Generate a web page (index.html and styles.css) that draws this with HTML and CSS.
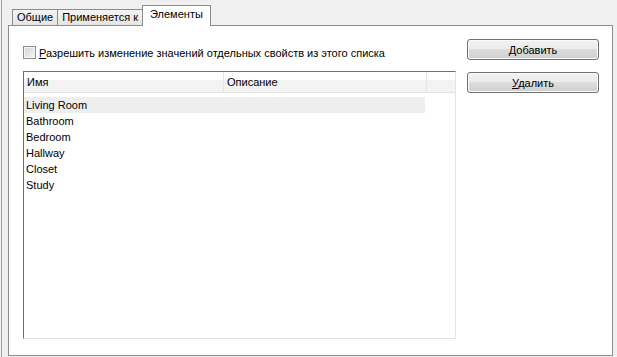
FILE: index.html
```html
<!DOCTYPE html>
<html lang="ru">
<head>
    <meta charset="UTF-8">
    <title>Свойства</title>
    <link rel="stylesheet" href="styles.css">
</head>
<body>

    <div class="window">
        <div class="tabs">
            <div class="tab first">Общие</div>
            <div class="tab">Применяется к</div>
            <div class="tab active">Элементы</div>
        </div>

        <div class="panel">
            <div class="main-column">
                <label class="check-row">
                    <span class="checkbox"></span>
                    <span><u>Р</u>азрешить изменение значений отдельных свойств из этого списка</span>
                </label>

                <div class="list">
                    <div class="list-header">
                        <div class="col col-name">Имя</div>
                        <div class="col col-desc">Описание</div>
                        <div class="col col-fill"></div>
                    </div>
                    <div class="list-body">
                        <div class="row selected">Living Room</div>
                        <div class="row">Bathroom</div>
                        <div class="row">Bedroom</div>
                        <div class="row">Hallway</div>
                        <div class="row">Closet</div>
                        <div class="row">Study</div>
                    </div>
                </div>
            </div>

            <div class="buttons">
                <button class="btn"><u>Д</u>обавить</button>
                <button class="btn"><u>У</u>далить</button>
            </div>
        </div>
    </div>

</body>
</html>
```

FILE: styles.css
```css
body {
    margin: 0;
    background: #f0f0f0;
    font-family: 'Liberation Sans', Arial, sans-serif;
    font-size: 11px;
    color: #000;
}

.window {
    height: 357px;
    box-sizing: border-box;
    margin-left: 1px;
    border-left: 1px solid #a0a0a0;
    padding: 5px 4px 1px 6px;
    display: flex;
    flex-direction: column;
}

/* вкладки */
.tabs {
    display: flex;
    align-items: flex-end;
    height: 20px;
    padding-left: 4px;
}

.tab {
    height: 16px;
    box-sizing: border-box;
    padding: 0 4px;
    line-height: 15px;
    border: 1px solid #898c95;
    border-bottom: none;
    border-right: none;
    background: linear-gradient(#f3f3f3, #e5e5e5);
}

.tab.active {
    position: relative;
    z-index: 1;
    height: 21px;
    margin-bottom: -1px;
    padding: 0 7px;
    line-height: 17px;
    border-right: 1px solid #898c95;
    background: #fff;
}

/* панель */
.panel {
    flex: 1;
    display: flex;
    gap: 11px;
    padding: 13px 13px 16px 14px;
    border: 1px solid #898c95;
    background: #fff;
}

.main-column {
    flex: 1;
    display: flex;
    flex-direction: column;
    padding-top: 6px;
}

.check-row {
    display: flex;
    align-items: center;
    gap: 3px;
    height: 15px;
    margin-bottom: 11px;
}

.checkbox {
    width: 13px;
    height: 13px;
    box-sizing: border-box;
    border: 1px solid #8f8f8f;
    box-shadow: inset 0 0 0 1px #f4f4f4;
    background: linear-gradient(135deg, #d4d4d4, #f6f6f6);
}

/* список */
.list {
    flex: 1;
    border: 1px solid;
    border-color: #6f6f6f #e3e3e3 #e3e3e3 #6f6f6f;
    background: #fff;
}

.list-header {
    display: flex;
    height: 20px;
    line-height: 20px;
    border-bottom: 1px solid #e2e2e2;
    background: linear-gradient(#fff 0, #fff 42%, #f3f3f4 42%, #f3f3f4 100%);
}

.col {
    padding-left: 3px;
    box-sizing: border-box;
    border-right: 1px solid #e5e5e5;
}

.col-name {
    width: 200px;
}

.col-desc {
    width: 203px;
}

.col-fill {
    flex: 1;
    border-right: none;
}

.list-body {
    padding-top: 4px;
}

.row {
    width: 401px;
    height: 16px;
    line-height: 16px;
    padding-left: 2px;
    box-sizing: border-box;
}

.row.selected {
    background: #eeeeee;
}

/* кнопки */
.buttons {
    width: 132px;
    display: flex;
    flex-direction: column;
    gap: 12px;
}

.btn {
    height: 21px;
    padding: 1px 0 0;
    font: inherit;
    color: #000;
    border: 1px solid #707070;
    border-radius: 3px;
    box-shadow: inset 0 0 0 1px #fcfcfc;
    background: linear-gradient(#f2f2f2 0, #ebebeb 45%, #dddddd 50%, #cfcfcf 100%);
}
```
